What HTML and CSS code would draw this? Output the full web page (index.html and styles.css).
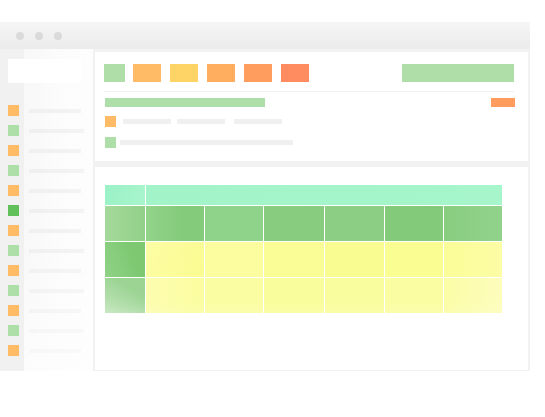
FILE: index.html
```html
<!DOCTYPE html>
<html>
<head>
<meta charset="utf-8">
<link rel="stylesheet" href="styles.css">
</head>
<body>
<div class="window">
  <div class="titlebar">
    <span class="dot"></span><span class="dot"></span><span class="dot"></span>
  </div>
  <div class="body">
    <aside class="sidebar">
      <div class="search"></div>
      <ul class="menu">
        <li><span class="sq orange"></span><span class="ln"></span></li>
        <li><span class="sq green"></span><span class="ln long"></span></li>
        <li><span class="sq orange"></span><span class="ln"></span></li>
        <li><span class="sq green"></span><span class="ln long"></span></li>
        <li><span class="sq orange"></span><span class="ln"></span></li>
        <li><span class="sq dark"></span><span class="ln long"></span></li>
        <li><span class="sq orange"></span><span class="ln"></span></li>
        <li><span class="sq green"></span><span class="ln long"></span></li>
        <li><span class="sq orange"></span><span class="ln"></span></li>
        <li><span class="sq green"></span><span class="ln long"></span></li>
        <li><span class="sq orange"></span><span class="ln"></span></li>
        <li><span class="sq green"></span><span class="ln long"></span></li>
        <li><span class="sq orange"></span><span class="ln"></span></li>
      </ul>
      <div class="fade"></div>
    </aside>
    <main class="main">
      <section class="panel top">
        <div class="toolbar">
          <span class="btn b1"></span>
          <span class="btn b2"></span>
          <span class="btn b3"></span>
          <span class="btn b4"></span>
          <span class="btn b5"></span>
          <span class="btn b6"></span>
          <span class="btn wide"></span>
        </div>
        <div class="titlerow">
          <span class="gbar"></span>
          <span class="obar"></span>
        </div>
        <div class="row r1">
          <span class="sq orange"></span>
          <span class="gl w48"></span>
          <span class="gl w48 m6"></span>
          <span class="gl w48 m9"></span>
        </div>
        <div class="row r2">
          <span class="sq green"></span>
          <span class="gl w173 m3"></span>
        </div>
      </section>
      <section class="panel bottom">
        <div class="grid">
          <div class="c h0"></div>
          <div class="c hspan"></div>
          <div class="c g0"></div>
          <div class="c g1"></div>
          <div class="c g2"></div>
          <div class="c g3"></div>
          <div class="c g4"></div>
          <div class="c g5"></div>
          <div class="c g6"></div>
          <div class="c y0"></div>
          <div class="c y1"></div>
          <div class="c y2"></div>
          <div class="c y3"></div>
          <div class="c y4"></div>
          <div class="c y5"></div>
          <div class="c y6"></div>
          <div class="c z0"></div>
          <div class="c z1"></div>
          <div class="c z2"></div>
          <div class="c z3"></div>
          <div class="c z4"></div>
          <div class="c z5"></div>
          <div class="c z6"></div>
        </div>
        <div class="bfade"></div>
      </section>
    </main>
  </div>
</div>
</body>
</html>
```
FILE: styles.css
```css
* { box-sizing: border-box; }
html, body { margin: 0; padding: 0; background: #fff; }
body { width: 545px; height: 417px; overflow: hidden; }

.window {
  margin-top: 22px;
  width: 530px;
}
.titlebar {
  height: 27px;
  background: linear-gradient(#f6f6f6, #ebebeb);
  display: flex;
  align-items: center;
  padding-left: 16px;
  gap: 11px;
}
.dot {
  width: 8px; height: 8px;
  border-radius: 50%;
  background: #dadada;
}
.body {
  display: flex;
  height: 322px;
  background: #f2f2f2;
}
.sidebar {
  position: relative;
  width: 93px;
  flex: none;
  padding: 10px 0 0 8px;
  background: linear-gradient(90deg, #f1f1f1 0, #f1f1f1 24px, #f8f8f8 24px, #fbfbfb 60px, #fcfcfc 93px);
}
.search {
  width: 73px; height: 24px;
  background: #fff;
}
.menu {
  list-style: none;
  margin: 22px 0 0;
  padding: 0;
}
.menu li {
  height: 20px;
  display: flex;
  align-items: flex-start;
}
.sq {
  width: 11px; height: 11px;
  flex: none;
  display: block;
}
.orange { background: #ffbb66; }
.green { background: #afdfa9; }
.dark { background: #62c05a; }
.ln {
  margin: 4px 0 0 10px;
  width: 52px; height: 4px;
  background: #efefef;
}
.ln.long { width: 55px; }
.fade {
  position: absolute;
  left: 24px; right: 0; top: 0; bottom: 0;
  background: linear-gradient(90deg, rgba(255,255,255,0) 0, rgba(255,255,255,0.35) 100%),
              linear-gradient(180deg, rgba(255,255,255,0) 60%, rgba(255,255,255,0.6) 100%);
}

.main {
  flex: 1;
  padding: 3px 2px 1px 2px;
  display: flex;
  flex-direction: column;
  gap: 6px;
}
.panel { background: #fff; position: relative; }
.panel.top {
  height: 109px;
  padding: 12px 14px 0 9px;
}
.toolbar {
  display: flex;
  height: 18px;
  gap: 9px;
  padding-bottom: 0;
}
.btn { display: block; height: 18px; width: 28px; }
.b1 { width: 21px; background: #afdea9; margin-right: -1px; }
.b2 { background: #ffbb66; }
.b3 { background: #ffd466; }
.b4 { background: #ffae5f; }
.b5 { background: #ff9d5f; }
.b6 { background: #ff8c61; }
.btn.wide { width: 112px; margin-left: auto; background: #afdea9; }
.titlerow {
  margin-top: 9px;
  border-top: 1px solid #f1f1f1;
  padding-top: 6px;
  display: flex;
  justify-content: space-between;
  height: 16px;
}
.gbar { display: block; width: 160px; height: 9px; background: #aedeaa; margin-left: 1px; }
.obar { display: block; width: 24px; height: 9px; background: #ff9c5e; margin-right: -1px; }
.row { display: flex; align-items: center; margin-left: 1px; }
.r1 { margin-top: 9px; height: 11px; }
.r2 { margin-top: 10px; height: 11px; }
.gl { display: block; height: 5px; background: #f0f0f0; margin-left: 7px; }
.w48 { width: 48px; }
.m6 { margin-left: 6px; }
.m9 { margin-left: 9px; }
.w173 { width: 173px; }
.m3 { margin-left: 4px; }

.panel.bottom {
  flex: 1;
  padding: 18px 0 0 10px;
}
.grid {
  display: grid;
  grid-template-columns: 40px 58px 58px 60px 59px 58px 58px;
  grid-template-rows: 20px 35px 35px 35px;
  gap: 1px;
  width: 397px;
}
.hspan { grid-column: 2 / span 6; background: linear-gradient(90deg, #a2f4c8, #a6f5cb); }
.h0 { background: linear-gradient(100deg, #9bf1c6, #a8f5cc); }
.g0 { background: linear-gradient(90deg, #a5d99b, #92d189); }
.g1 { background: linear-gradient(90deg, #93d48b, #84cb7c 60%); }
.g2 { background: #8fd289; }
.g3 { background: #87cc7f; }
.g4 { background: #8dce85; }
.g5 { background: #83ca7b; }
.g6 { background: linear-gradient(90deg, #88cd80, #92d38b); }
.y0 { background: linear-gradient(70deg, #90d288, #7dc871 70%); }
.y1 { background: linear-gradient(110deg, #fdfda5, #fafb90); }
.y2 { background: #fbfd9e; }
.y3 { background: #fafc96; }
.y4 { background: #f9fc90; }
.y5 { background: #f9fd92; }
.y6 { background: linear-gradient(90deg, #fbfd98, #fcfda5); }
.z0 { background: linear-gradient(30deg, #c3e6bc, #9bd493 70%); }
.z1 { background: linear-gradient(90deg, #fdfdb0, #fbfd9f); }
.z2 { background: #fbfda3; }
.z3 { background: #fafd9c; }
.z4 { background: #fafd9d; }
.z5 { background: #fbfda3; }
.z6 { background: linear-gradient(90deg, #fbfda6, #fdfdbc); }
.bfade {
  position: absolute;
  left: 0; right: 0; bottom: 0; height: 70px;
  background: linear-gradient(180deg, rgba(255,255,255,0), rgba(255,255,255,0.5));
  pointer-events: none;
}
```
